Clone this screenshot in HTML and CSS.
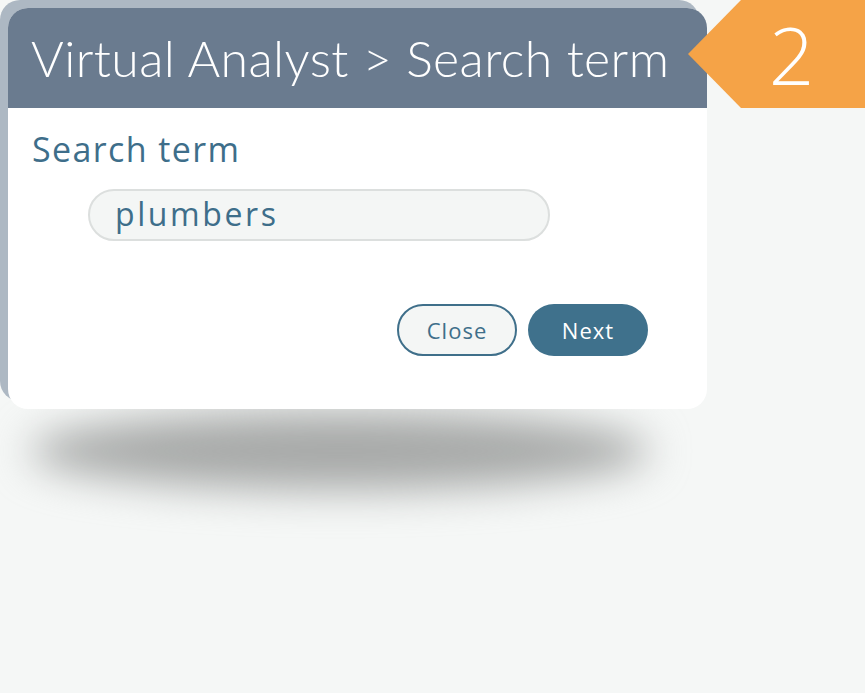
FILE: index.html
```html
<!DOCTYPE html>
<html>
<head>
<meta charset="utf-8">
<link rel="stylesheet" href="styles.css">
</head>
<body>
<div class="stage">
  <div class="card">
    <div class="card-head">
      <h1 class="title">Virtual Analyst &gt; Search term</h1>
    </div>
    <div class="card-body">
      <div class="label">Search term</div>
      <div class="field">plumbers</div>
      <div class="actions">
        <button class="btn btn-close">Close</button>
        <button class="btn btn-next">Next</button>
      </div>
    </div>
  </div>
  <div class="shadow"></div>
  <div class="step">2</div>
</div>
</body>
</html>
```

FILE: styles.css
```css
html, body {
  margin: 0;
  padding: 0;
  background: #f5f7f6;
}
.stage {
  position: relative;
  width: 865px;
  height: 693px;
  overflow: hidden;
  padding: 8px 0 0 8px;
  box-sizing: border-box;
}
.card {
  position: relative;
  z-index: 2;
  width: 699px;
  height: 401px;
  background: #ffffff;
  border-radius: 20px;
  box-shadow: -8px -8px 0 #adb8c3;
  display: flex;
  flex-direction: column;
}
.card-head {
  height: 100px;
  background: #6a7b8f;
  border-radius: 20px 20px 0 0;
  display: flex;
  align-items: center;
  padding-left: 23px;
}
.title {
  margin: 0;
  font-family: Lato, sans-serif;
  font-weight: 300;
  font-size: 50px;
  color: #ffffff;
  letter-spacing: 0.4px;
}
.card-body {
  padding: 21px 0 0 24px;
  display: flex;
  flex-direction: column;
}
.label {
  font-family: "Open Sans", sans-serif;
  font-size: 34px;
  letter-spacing: 1.4px;
  color: #3e6e8a;
  line-height: 40px;
}
.field {
  margin: 20px 0 0 56px;
  width: 462px;
  height: 52px;
  box-sizing: border-box;
  border: 2px solid #dcdfde;
  border-radius: 26px;
  background: #f4f6f5;
  font-family: "Open Sans", sans-serif;
  font-size: 32px;
  letter-spacing: 2.6px;
  line-height: 46px;
  color: #3e6e8a;
  padding-left: 25px;
}
.actions {
  display: flex;
  gap: 11px;
  margin: 63px 0 0 365px;
}
.btn {
  width: 120px;
  height: 52px;
  border-radius: 26px;
  font-family: "Open Sans", sans-serif;
  font-size: 22px;
  letter-spacing: 1px;
  box-sizing: border-box;
  padding: 0;
}
.btn-close {
  background: #f4f6f5;
  border: 2px solid #3f6f8a;
  color: #3f6f8a;
}
.btn-next {
  background: #3f718c;
  border: none;
  color: #ffffff;
}
.shadow {
  position: absolute;
  left: 30px;
  top: 412px;
  width: 620px;
  height: 78px;
  border-radius: 50%;
  background: #a7a9a8;
  filter: blur(20px);
  z-index: 1;
}
.step {
  position: absolute;
  z-index: 3;
  top: 0;
  right: 0;
  width: 177px;
  height: 108px;
  background: #f5a347;
  clip-path: polygon(53px 0, 177px 0, 177px 108px, 53px 108px, 0 54px);
  color: #ffffff;
  font-family: "Open Sans", sans-serif;
  font-weight: 300;
  font-size: 80px;
  line-height: 108px;
  box-sizing: border-box;
  padding-left: 30px;
  text-align: center;
}
```
